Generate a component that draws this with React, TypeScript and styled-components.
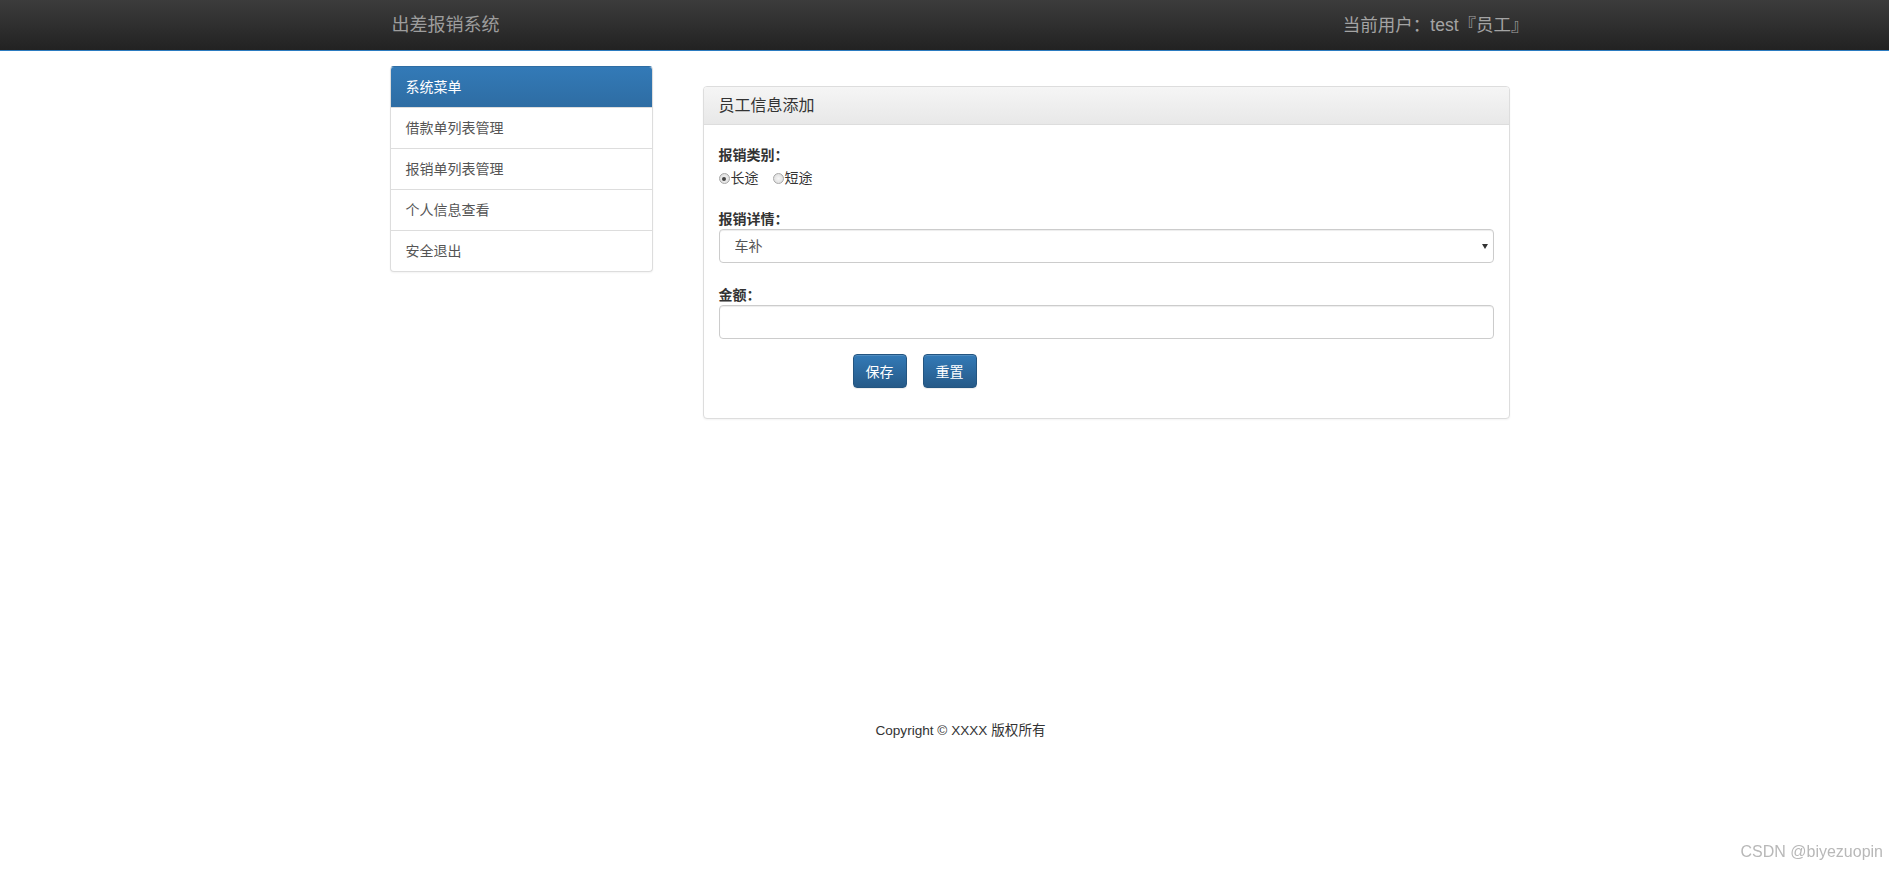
import styled, { createGlobalStyle } from 'styled-components';

const GlobalStyle = createGlobalStyle`
  html, body {
    margin: 0;
    padding: 0;
    background: #fff;
  }
  body {
    font-family: 'Liberation Sans', 'Noto Sans CJK SC', sans-serif;
    font-size: 14px;
    line-height: 20px;
    color: #333;
  }
  * {
    box-sizing: border-box;
  }
`;

const Navbar = styled.div`
  height: 51px;
  background: linear-gradient(to bottom, #3c3c3c 0%, #222 100%);
  border-bottom: 1px solid #2b7bc0;
`;

const NavInner = styled.div`
  width: 1170px;
  height: 50px;
  margin: 0 auto;
  padding: 0 1px 0 32px;
  display: flex;
  align-items: center;
  justify-content: space-between;
`;

const Brand = styled.div`
  font-size: 18px;
  color: #9d9d9d;
  line-height: 20px;
`;

const UserInfo = styled.div`
  font-size: 17.5px;
  color: #a4a4a4;
  line-height: 20px;
`;

const Container = styled.div`
  width: 1170px;
  margin: 0 auto;
  padding: 0 20px 0 30px;
`;

const Row = styled.div`
  display: flex;
  align-items: flex-start;
  gap: 50px;
  padding-top: 15px;
`;

const Panel = styled.div`
  border: 1px solid #ddd;
  border-radius: 4px;
  background: #fff;
  box-shadow: 0 1px 2px rgba(0, 0, 0, 0.05);
  overflow: hidden;
`;

const SideMenu = styled(Panel)`
  width: 263px;
  flex: none;
  border-top-color: #2e6da4;
`;

const MenuHeading = styled.div`
  background: linear-gradient(to bottom, #337ab7 0%, #2e6da4 100%);
  color: #fff;
  padding: 10px 15px 9px;
  border-bottom: 1px solid #2e6da4;
  line-height: 20px;
`;

const MenuItem = styled.div`
  padding: 10px 15px;
  color: #555;
  line-height: 20px;
  border-top: 1px solid #ddd;
  &:first-of-type {
    border-top: none;
  }
`;

const MainPanel = styled(Panel)`
  width: 807px;
  margin-top: 20px;
`;

const PanelHeading = styled.div`
  background: linear-gradient(to bottom, #f5f5f5 0%, #e8e8e8 100%);
  border-bottom: 1px solid #ddd;
  padding: 10px 15px;
  font-size: 16px;
  line-height: 17px;
  color: #333;
`;

const PanelBody = styled.div`
  padding: 21px 15px 30px;
`;

const FormGroup = styled.div<{ $gap?: number }>`
  margin-bottom: ${(p) => (p.$gap ?? 22)}px;
`;

const Label = styled.div`
  font-weight: bold;
  font-size: 14px;
  line-height: 19px;
  color: #333;
`;

const RadioRow = styled.div`
  display: flex;
  align-items: center;
  gap: 14px;
  margin-top: 4px;
  line-height: 19px;
`;

const RadioLabel = styled.label`
  display: flex;
  align-items: center;
  font-size: 14px;
  color: #333;
`;

const Radio = styled.input`
  appearance: none;
  width: 11px;
  height: 11px;
  margin: 0 1px 0 0;
  border: 1px solid #a8a8a8;
  border-radius: 50%;
  background: radial-gradient(circle, #f6f6f6 0%, #d8d8d8 100%);
  position: relative;
  &:checked::after {
    content: '';
    position: absolute;
    left: 2.5px;
    top: 2.5px;
    width: 4px;
    height: 4px;
    border-radius: 50%;
    background: #444;
  }
`;

const SelectWrap = styled.div`
  position: relative;
  width: 775px;
`;

const Select = styled.select`
  appearance: none;
  width: 100%;
  height: 34px;
  padding: 6px 12px 6px 15px;
  border: 1px solid #ccc;
  border-radius: 4px;
  background: #fff;
  font-family: inherit;
  font-size: 14px;
  color: #555;
  box-shadow: inset 0 1px 1px rgba(0, 0, 0, 0.075);
  outline: none;
`;

const Caret = styled.span`
  position: absolute;
  right: 6px;
  top: 15px;
  width: 0;
  height: 0;
  border-left: 3px solid transparent;
  border-right: 3px solid transparent;
  border-top: 5px solid #333;
  pointer-events: none;
`;

const Input = styled.input`
  width: 775px;
  height: 34px;
  padding: 6px 12px;
  border: 1px solid #ccc;
  border-radius: 4px;
  font-family: inherit;
  font-size: 14px;
  box-shadow: inset 0 1px 1px rgba(0, 0, 0, 0.075);
  outline: none;
`;

const ButtonRow = styled.div`
  display: flex;
  gap: 16px;
  padding-left: 134px;
`;

const Button = styled.button`
  width: 54px;
  height: 34px;
  padding: 0;
  border: 1px solid #245580;
  border-radius: 4px;
  background: linear-gradient(to bottom, #337ab7 0%, #265a88 100%);
  color: #fff;
  font-family: inherit;
  font-size: 14px;
  box-shadow: inset 0 1px 0 rgba(255, 255, 255, 0.15), 0 1px 1px rgba(0, 0, 0, 0.075);
  cursor: pointer;
`;

const Footer = styled.div`
  margin-top: 302px;
  padding-left: 22px;
  text-align: center;
  font-size: 13.6px;
  line-height: 20px;
  color: #333;
`;

const Watermark = styled.div`
  position: fixed;
  right: 6px;
  bottom: 8px;
  font-size: 16px;
  color: #b8b8b8;
`;

const menuItems = ['借款单列表管理', '报销单列表管理', '个人信息查看', '安全退出'];

export default function App() {
  return (
    <>
      <GlobalStyle />
      <Navbar>
        <NavInner>
          <Brand>出差报销系统</Brand>
          <UserInfo>当前用户：test『员工』</UserInfo>
        </NavInner>
      </Navbar>
      <Container>
        <Row>
          <SideMenu>
            <MenuHeading>系统菜单</MenuHeading>
            {menuItems.map((item) => (
              <MenuItem key={item}>{item}</MenuItem>
            ))}
          </SideMenu>
          <MainPanel>
            <PanelHeading>员工信息添加</PanelHeading>
            <PanelBody>
              <FormGroup>
                <Label>报销类别：</Label>
                <RadioRow>
                  <RadioLabel>
                    <Radio type="radio" name="type" defaultChecked />
                    长途
                  </RadioLabel>
                  <RadioLabel>
                    <Radio type="radio" name="type" />
                    短途
                  </RadioLabel>
                </RadioRow>
              </FormGroup>
              <FormGroup $gap={23}>
                <Label>报销详情：</Label>
                <SelectWrap>
                  <Select defaultValue="车补">
                    <option value="车补">车补</option>
                    <option value="餐补">餐补</option>
                    <option value="住宿">住宿</option>
                  </Select>
                  <Caret />
                </SelectWrap>
              </FormGroup>
              <FormGroup $gap={15}>
                <Label>金额：</Label>
                <Input type="text" />
              </FormGroup>
              <ButtonRow>
                <Button>保存</Button>
                <Button>重置</Button>
              </ButtonRow>
            </PanelBody>
          </MainPanel>
        </Row>
        <Footer>Copyright © XXXX 版权所有</Footer>
      </Container>
      <Watermark>CSDN @biyezuopin</Watermark>
    </>
  );
}
